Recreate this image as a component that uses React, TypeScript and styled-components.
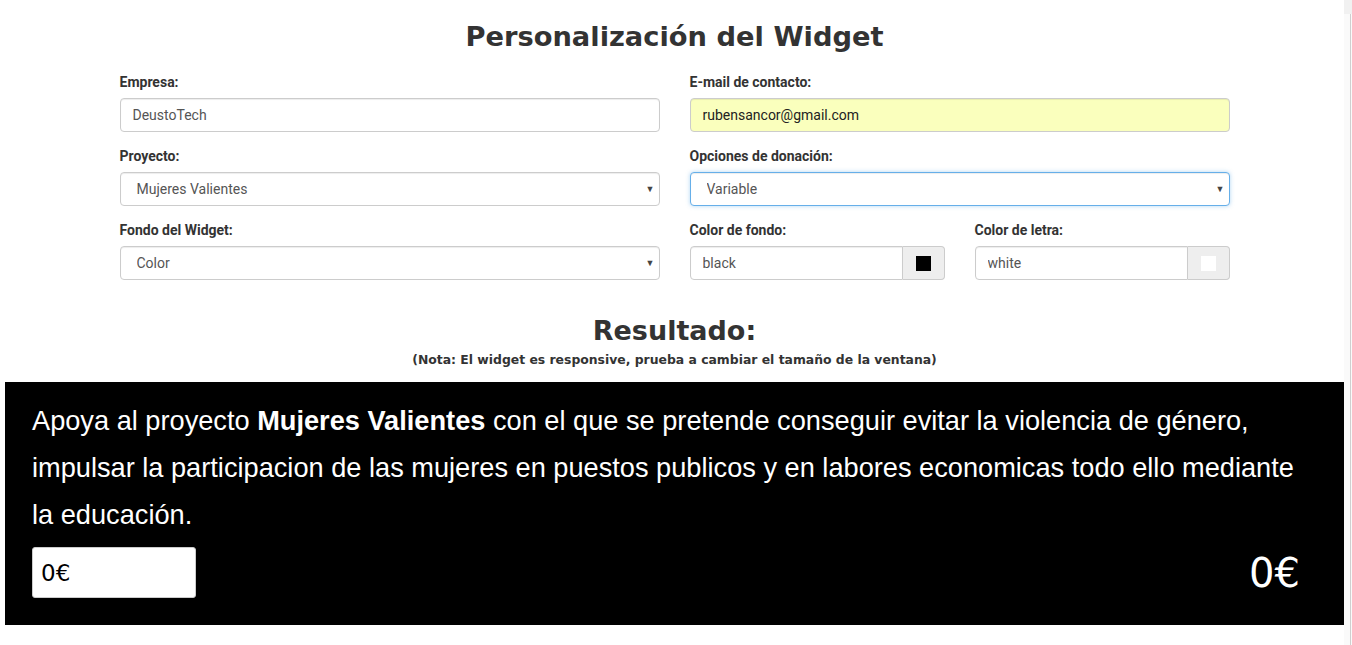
import React from "react";
import styled, { createGlobalStyle } from "styled-components";

const GlobalStyle = createGlobalStyle`
  html, body { margin: 0; padding: 0; background: #fff; }
  body { font-family: Roboto, "Liberation Sans", sans-serif; color: #333; }
  * { box-sizing: border-box; }
`;

const Page = styled.div`
  display: flex;
  width: 1352px;
  min-height: 645px;
`;

const Main = styled.main`
  flex: 1;
  margin-left: 5px;
  display: flex;
  flex-direction: column;
  align-items: center;
`;

const ScrollStrip = styled.div`
  width: 8px;
  display: flex;
  flex-direction: column;
  background: #fafafa;
`;

const ScrollTop = styled.div`
  height: 14px;
  background: #f1f1f1;
`;

const ScrollTrack = styled.div`
  flex: 1;
  margin-left: 6px;
  width: 1px;
  background: #cfcfcf;
`;

const Title = styled.h1`
  margin: 19px 0 18px;
  font-family: "DejaVu Sans", sans-serif;
  font-weight: 700;
  font-size: 27.3px;
  line-height: 36px;
  color: #333;
  text-align: center;
`;

const Form = styled.form`
  width: 1110px;
  display: grid;
  grid-template-columns: 1fr 1fr;
  column-gap: 30px;
`;

const Split = styled.div`
  display: grid;
  grid-template-columns: 1fr 1fr;
  column-gap: 30px;
`;

const Group = styled.div`
  display: flex;
  flex-direction: column;
  margin-bottom: 15px;
`;

const Label = styled.label`
  font-family: Roboto, sans-serif;
  font-weight: 700;
  font-size: 14px;
  line-height: 19px;
  margin-bottom: 6px;
  color: #333;
`;

const TextInput = styled.input<{ $autofill?: boolean }>`
  height: 34px;
  padding: 6px 12px;
  font-family: Roboto, sans-serif;
  font-size: 14px;
  color: ${(p) => (p.$autofill ? "#222" : "#555")};
  background: ${(p) => (p.$autofill ? "#faffbd" : "#fff")};
  border: 1px solid #ccc;
  border-radius: 4px;
  box-shadow: inset 0 1px 1px rgba(0, 0, 0, 0.075);
  outline: none;
  width: 100%;
`;

const SelectWrap = styled.div`
  position: relative;
`;

const Select = styled.select<{ $focused?: boolean }>`
  appearance: none;
  -webkit-appearance: none;
  width: 100%;
  height: 34px;
  padding: 6px 12px 6px 16px;
  font-family: Roboto, sans-serif;
  font-size: 14px;
  color: #555;
  background: #fff;
  border: 1px solid ${(p) => (p.$focused ? "#66afe9" : "#ccc")};
  border-radius: 4px;
  box-shadow: ${(p) =>
    p.$focused
      ? "inset 0 1px 1px rgba(0,0,0,.075), 0 0 4px rgba(102,175,233,.5)"
      : "inset 0 1px 1px rgba(0,0,0,.075)"};
  outline: none;
`;

const Arrow = styled.span`
  position: absolute;
  right: 5px;
  top: 50%;
  transform: translateY(-50%);
  font-size: 9px;
  color: #444;
  pointer-events: none;
`;

const InputGroup = styled.div`
  display: flex;
  height: 34px;
`;

const GroupInput = styled(TextInput)`
  flex: 1;
  border-radius: 4px 0 0 4px;
`;

const Addon = styled.span`
  width: 42px;
  display: flex;
  align-items: center;
  justify-content: center;
  background: #eee;
  border: 1px solid #ccc;
  border-left: none;
  border-radius: 0 4px 4px 0;
`;

const Swatch = styled.i<{ $color: string }>`
  display: block;
  width: 15px;
  height: 15px;
  background: ${(p) => p.$color};
`;

const ResultTitle = styled.h2`
  margin: 19px 0 0;
  font-family: "DejaVu Sans", sans-serif;
  font-weight: 700;
  font-size: 27px;
  line-height: 34px;
  color: #333;
  text-align: center;
`;

const Note = styled.p`
  margin: 3px 0 13px;
  font-family: "DejaVu Sans", sans-serif;
  font-weight: 700;
  font-size: 12.4px;
  line-height: 18px;
  color: #333;
  text-align: center;
`;

const Widget = styled.section<{ $bg: string; $fg: string }>`
  align-self: stretch;
  background: ${(p) => p.$bg};
  color: ${(p) => p.$fg};
  padding: 15px 44px 27px 27px;
  display: flex;
  flex-direction: column;
  gap: 9px;
`;

const Pitch = styled.p`
  margin: 0;
  font-family: "Liberation Sans", Arial, sans-serif;
  font-size: 27.2px;
  line-height: 47px;
`;

const DonateRow = styled.div`
  display: flex;
  align-items: center;
  justify-content: space-between;
`;

const Amount = styled.input`
  width: 164px;
  height: 51px;
  padding: 0 9px 0 8px;
  border: 1px solid #ccc;
  border-radius: 3px;
  background: #fff;
  font-family: "DejaVu Sans", sans-serif;
  font-size: 23px;
  color: #000;
  outline: none;
`;

const Total = styled.span`
  font-family: "DejaVu Sans", sans-serif;
  font-size: 40px;
  line-height: 48px;
  color: #fff;
`;

export default function App() {
  return (
    <>
      <GlobalStyle />
      <Page>
        <Main>
          <Title>Personalización del Widget</Title>
          <Form onSubmit={(e) => e.preventDefault()}>
            <Group>
              <Label>Empresa:</Label>
              <TextInput defaultValue="DeustoTech" />
            </Group>
            <Group>
              <Label>E-mail de contacto:</Label>
              <TextInput $autofill defaultValue="rubensancor@gmail.com" />
            </Group>
            <Group>
              <Label>Proyecto:</Label>
              <SelectWrap>
                <Select defaultValue="mv">
                  <option value="mv">Mujeres Valientes</option>
                </Select>
                <Arrow>▼</Arrow>
              </SelectWrap>
            </Group>
            <Group>
              <Label>Opciones de donación:</Label>
              <SelectWrap>
                <Select $focused defaultValue="var">
                  <option value="var">Variable</option>
                </Select>
                <Arrow>▼</Arrow>
              </SelectWrap>
            </Group>
            <Group>
              <Label>Fondo del Widget:</Label>
              <SelectWrap>
                <Select defaultValue="color">
                  <option value="color">Color</option>
                </Select>
                <Arrow>▼</Arrow>
              </SelectWrap>
            </Group>
            <Split>
              <Group>
                <Label>Color de fondo:</Label>
                <InputGroup>
                  <GroupInput defaultValue="black" />
                  <Addon>
                    <Swatch $color="#000" />
                  </Addon>
                </InputGroup>
              </Group>
              <Group>
                <Label>Color de letra:</Label>
                <InputGroup>
                  <GroupInput defaultValue="white" />
                  <Addon>
                    <Swatch $color="#fff" />
                  </Addon>
                </InputGroup>
              </Group>
            </Split>
          </Form>
          <ResultTitle>Resultado:</ResultTitle>
          <Note>(Nota: El widget es responsive, prueba a cambiar el tamaño de la ventana)</Note>
          <Widget $bg="#000" $fg="#fff">
            <Pitch>
              Apoya al proyecto <b>Mujeres Valientes</b> con el que se pretende conseguir
              evitar la violencia de género, impulsar la participacion de las mujeres en
              puestos publicos y en labores economicas todo ello mediante la educación.
            </Pitch>
            <DonateRow>
              <Amount defaultValue="0€" />
              <Total>0€</Total>
            </DonateRow>
          </Widget>
        </Main>
        <ScrollStrip>
          <ScrollTop />
          <ScrollTrack />
        </ScrollStrip>
      </Page>
    </>
  );
}
